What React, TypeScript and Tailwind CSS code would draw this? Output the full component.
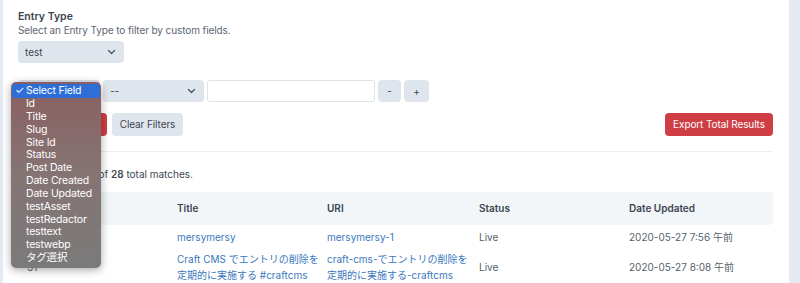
const FONT = "font-['Inter','Noto_Sans_CJK_JP',sans-serif]";

const FIELDS = [
  "Id",
  "Title",
  "Slug",
  "Site Id",
  "Status",
  "Post Date",
  "Date Created",
  "Date Updated",
  "testAsset",
  "testRedactor",
  "testtext",
  "testwebp",
  "タグ選択",
];

function Chevron() {
  return (
    <svg width="9" height="6" viewBox="0 0 9 6" className="shrink-0">
      <path d="M1.5 1.5l3 3 3-3" fill="none" stroke="#4a5461" strokeWidth="1.3" strokeLinecap="round" strokeLinejoin="round" />
    </svg>
  );
}

function SelectBox({ label, width }: { label: string; width: string }) {
  return (
    <div className={`${width} h-[22px] rounded-[4px] bg-[#dfe5ec] flex items-center justify-between pl-[7px] pr-[8px] text-[10px] text-[#3d4650] whitespace-nowrap`}>
      <span>{label}</span>
      <Chevron />
    </div>
  );
}

function FieldMenu() {
  return (
    <div className="absolute left-[11px] top-[82px] w-[90px] h-[186px] rounded-[5px] bg-gradient-to-b from-[#8a5f61] via-[#857474] to-[#7a7a7a] shadow-[0_2px_8px_rgba(0,0,0,0.35)] pt-[2px] text-[10.5px] leading-[12.85px] tracking-[-0.2px] text-white whitespace-nowrap">
      <div className="mx-[1px] h-[14px] rounded-[2px] bg-[#2d6fd6] flex items-center pl-[3px]">
        <span className="w-[11px]">✓</span>
        <span>Select Field</span>
      </div>
      {FIELDS.map((f) => (
        <div key={f} className="pl-[15px]">
          {f}
        </div>
      ))}
    </div>
  );
}

export default function App() {
  return (
    <div className={`${FONT} relative w-[800px] h-[283px] overflow-hidden bg-[#e3eaf3]`}>
      <div className="ml-[3px] w-[786px] h-full bg-white pl-[15px] pr-[16px] pt-[10px]">

        {/* ── Entry type ── */}
        <p className="text-[10.5px] leading-[14px] font-semibold text-[#3b4450]">Entry Type</p>
        <p className="text-[10px] leading-[13px] tracking-[-0.1px] text-[#5b6673]">
          Select an Entry Type to filter by custom fields.
        </p>
        <div className="mt-[4px]">
          <SelectBox label="test" width="w-[106px]" />
        </div>

        {/* ── Filter row ── */}
        <div className="mt-[17px] flex gap-[3px]">
          <SelectBox label="Select Field" width="w-[82px]" />
          <SelectBox label="--" width="w-[101px]" />
          <div className="w-[168px] h-[22px] rounded-[3px] border border-[#dde3ea] bg-white" />
          <div className="w-[23px] h-[22px] rounded-[4px] bg-[#dfe5ec] flex items-center justify-center text-[10px] text-[#3d4650]">-</div>
          <div className="w-[25px] h-[22px] rounded-[4px] bg-[#dfe5ec] flex items-center justify-center text-[10px] text-[#3d4650]">+</div>
        </div>

        {/* ── Actions ── */}
        <div className="mt-[11px] flex items-center justify-between text-[10px] tracking-[-0.1px] whitespace-nowrap">
          <div className="flex gap-[5px]">
            <button className="w-[89px] h-[23px] rounded-[4px] bg-[#cf3e44] text-white">Apply Filters</button>
            <button className="w-[71px] h-[23px] rounded-[4px] bg-[#dfe5ec] text-[#3d4650]">Clear Filters</button>
          </div>
          <button className="w-[108px] h-[23px] rounded-[4px] bg-[#cf3e44] text-white">Export Total Results</button>
        </div>

        <div className="mt-[15px] border-t border-[#eceff3]" />

        {/* ── Summary ── */}
        <p className="mt-[15px] text-[10px] leading-[14px] text-[#3d4650]">
          Showing <span className="font-semibold">(1 - 28)</span> of <span className="font-semibold">28</span> total matches.
        </p>

        {/* ── Results ── */}
        <table className="mt-[11px] w-[755px] table-fixed border-collapse text-[10px] text-left whitespace-nowrap">
          <colgroup>
            <col className="w-[150px]" />
            <col className="w-[150px]" />
            <col className="w-[152px]" />
            <col className="w-[150px]" />
            <col />
          </colgroup>
          <thead>
            <tr className="bg-[#f3f6f9] h-[33px]">
              <th className="pl-[9px] font-semibold text-[#3b4450] rounded-l-[4px]">Id</th>
              <th className="pl-[9px] font-semibold text-[#3b4450]">Title</th>
              <th className="pl-[9px] font-semibold text-[#3b4450]">URI</th>
              <th className="pl-[9px] font-semibold text-[#3b4450]">Status</th>
              <th className="pl-[9px] font-semibold text-[#3b4450] rounded-r-[4px]">Date Updated</th>
            </tr>
          </thead>
          <tbody className="text-[#555f6b]">
            <tr className="h-[25px]">
              <td className="pl-[9px]">30</td>
              <td className="pl-[9px] text-[#3a77bd]">mersymersy</td>
              <td className="pl-[9px] text-[#3a77bd]">mersymersy-1</td>
              <td className="pl-[9px]">Live</td>
              <td className="pl-[9px]">2020-05-27 7:56 午前</td>
            </tr>
            <tr className="leading-[16px]">
              <td className="pl-[9px] pt-[1px]">31</td>
              <td className="pl-[9px] pt-[1px] text-[#3a77bd]">
                Craft CMS でエントリの削除を<br />定期的に実施する #craftcms
              </td>
              <td className="pl-[9px] pt-[1px] text-[#3a77bd]">
                craft-cms-でエントリの削除を<br />定期的に実施する-craftcms
              </td>
              <td className="pl-[9px] pt-[1px]">Live</td>
              <td className="pl-[9px] pt-[1px]">2020-05-27 8:08 午前</td>
            </tr>
          </tbody>
        </table>
      </div>

      <FieldMenu />
    </div>
  );
}
